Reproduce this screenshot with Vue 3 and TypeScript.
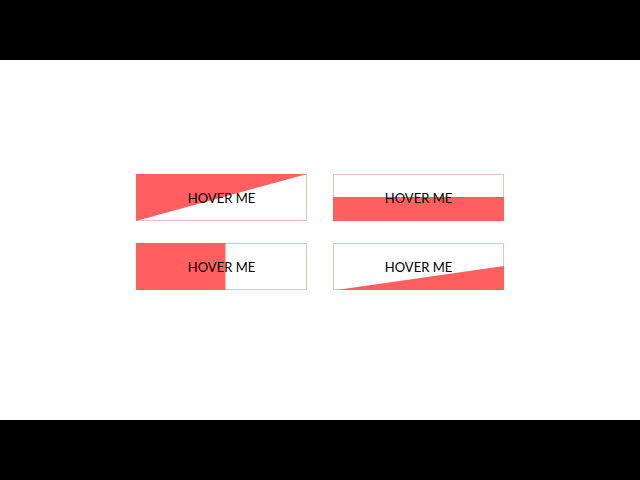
<script setup lang="ts">
interface HoverButton {
  id: string
  label: string
  fill: string
}

const buttons: HoverButton[] = [
  { id: 'diagonal', label: 'HOVER ME', fill: '0,0 100,0 0,100' },
  { id: 'rise', label: 'HOVER ME', fill: '0,49 100,49 100,100 0,100' },
  { id: 'slide', label: 'HOVER ME', fill: '0,0 52.3,0 52.3,100 0,100' },
  { id: 'wedge', label: 'HOVER ME', fill: '2,100 100,49 100,100' },
]
</script>

<template>
  <div class="screen">
    <main class="stage">
      <div class="buttons">
        <button v-for="button in buttons" :key="button.id" type="button" class="button">
          <svg class="fill" viewBox="0 0 100 100" preserveAspectRatio="none" aria-hidden="true">
            <polygon :points="button.fill" />
          </svg>
          <span class="label">{{ button.label }}</span>
        </button>
      </div>
    </main>
  </div>
</template>

<style>
body {
  background: #000;
}
</style>

<style scoped>
.screen {
  display: flex;
  align-items: center;
  min-height: 100vh;
  background: #000;
}

.stage {
  display: flex;
  align-items: center;
  justify-content: center;
  box-sizing: border-box;
  width: 100%;
  aspect-ratio: 16 / 9;
  padding-bottom: 16px;
  background: #fff;
}

.buttons {
  display: grid;
  grid-template-columns: repeat(2, 171px);
  gap: 22px 26px;
}

.button {
  display: grid;
  align-items: center;
  justify-items: center;
  height: 47px;
  padding: 0;
  border: 0;
  background: #fff;
  box-shadow: inset 0 0 0 1px #e2c4c0;
  color: #000;
  font-family: Lato, "Liberation Sans", sans-serif;
  font-size: 13px;
  line-height: 16px;
  cursor: pointer;
}

.fill,
.label {
  grid-area: 1 / 1;
}

.fill {
  width: 100%;
  height: 47px;
  fill: #ff5f5f;
}

.label {
  z-index: 1;
}
</style>
